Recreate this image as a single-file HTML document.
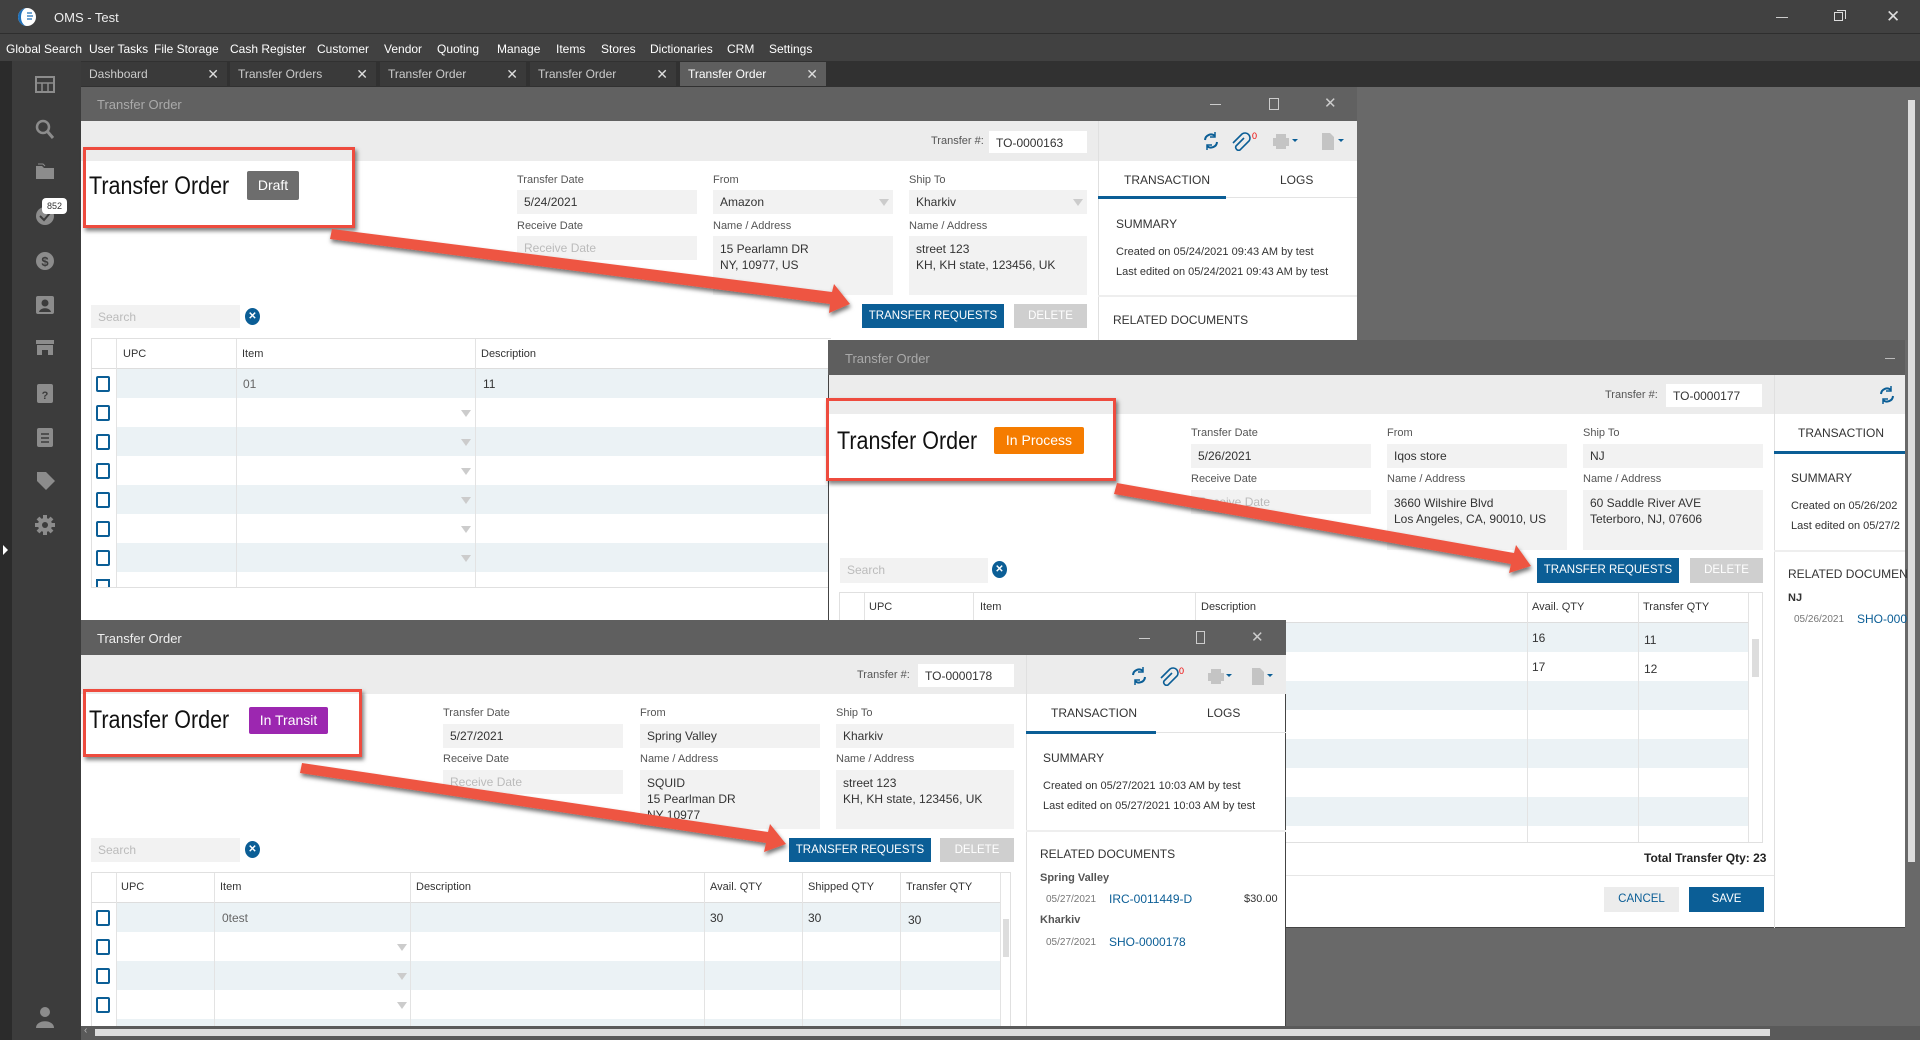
<!DOCTYPE html>
<html><head><meta charset="utf-8"><style>
*{box-sizing:border-box;margin:0;padding:0}
body{width:1920px;height:1040px;overflow:hidden;background:#696969;font-family:"Liberation Sans",sans-serif;position:relative;color:#333}
.a{position:absolute}
.t{position:absolute;white-space:nowrap}
.menu{font-size:12px;color:#fff;top:42px}
.tab{position:absolute;top:62px;height:24px;width:146px;background:#3a3a3a;color:#ccc;font-size:12px;line-height:24px;padding-left:8px}
.tab span{position:absolute;right:8px;top:0;font-size:14px;color:#ddd}
.tb{position:absolute;background:#606060}
.lbl{position:absolute;font-size:11px;color:#555;white-space:nowrap}
.inp{position:absolute;background:#f2f2f2;font-size:12px;color:#333;padding:5px 7px;white-space:nowrap;overflow:hidden;line-height:14px}
.ph{color:#bbb}
.btn{position:absolute;font-size:11.5px;color:#fff;background:#0b5e96;text-align:center;line-height:24px}
.del{background:#cfcfcf}
.hd{position:absolute;font-size:11px;color:#333;white-space:nowrap}
.cb{position:absolute;width:14px;height:16px;border:2px solid #0b5e96;border-radius:2px;background:#fff}
.row{position:absolute;height:29px}
.alt{background:#ebf2f5}
.dd{position:absolute;width:0;height:0;border-left:5px solid transparent;border-right:5px solid transparent;border-top:7px solid #ccc}
.vl{position:absolute;width:1px;background:#e3e3e3}
.rp{font-size:11px;color:#333}
.red{position:absolute;border:3px solid #ee4b3e;box-shadow:2px 3px 4px rgba(0,0,0,.5)}
.big{position:absolute;font-size:25px;color:#111;white-space:nowrap;transform:scaleX(0.86);transform-origin:0 0}
.badge{position:absolute;color:#fff;font-size:14px;text-align:center;border-radius:2px}
.xc{position:absolute;width:15px;height:17px;border-radius:50%;background:#0b5e96;color:#fff;font-size:10px;text-align:center;line-height:17px;font-weight:bold}
.si{position:absolute;left:36px}
</style></head><body>

<div class="a" style="left:0;top:0;width:1920px;height:34px;background:#414141;border-bottom:1px solid #2e2e2e"></div>
<svg class="a" style="left:17px;top:7px" width="20" height="20"><circle cx="10" cy="10" r="9" fill="#fff"/><path d="M10 1a9 9 0 0 0 0 18a6 9 0 0 1 0-18z" fill="#1d6fb8"/><path d="M10 6h5M10 9h6M10 12h5" stroke="#1d6fb8" stroke-width="1.3"/></svg>
<div class="t" style="left:54px;top:10px;font-size:13px;color:#eee">OMS - Test</div>
<div class="a" style="left:1776px;top:17px;width:12px;height:1px;background:#ccc"></div>
<div class="a" style="left:1834px;top:12px;width:9px;height:9px;border:1px solid #ddd"></div>
<div class="a" style="left:1837px;top:10px;width:9px;height:9px;border-top:1px solid #ddd;border-right:1px solid #ddd"></div>
<div class="t" style="left:1886px;top:7px;font-size:17px;color:#ddd">✕</div>

<div class="a" style="left:0;top:34px;width:1920px;height:27px;background:#414141"></div>
<div class="t menu" style="left:6px">Global Search</div>
<div class="t menu" style="left:89px">User Tasks</div>
<div class="t menu" style="left:154px">File Storage</div>
<div class="t menu" style="left:230px">Cash Register</div>
<div class="t menu" style="left:317px">Customer</div>
<div class="t menu" style="left:384px">Vendor</div>
<div class="t menu" style="left:437px">Quoting</div>
<div class="t menu" style="left:497px">Manage</div>
<div class="t menu" style="left:556px">Items</div>
<div class="t menu" style="left:601px">Stores</div>
<div class="t menu" style="left:650px">Dictionaries</div>
<div class="t menu" style="left:727px">CRM</div>
<div class="t menu" style="left:769px">Settings</div>

<div class="a" style="left:0;top:61px;width:12px;height:979px;background:#2b2b2b"></div>
<div class="a" style="left:12px;top:61px;width:69px;height:979px;background:#3c3c3c"></div>
<div class="a" style="left:81px;top:61px;width:1839px;height:26px;background:#313131"></div>
<svg class="si" width="20" height="500" style="top:75px;left:35px" fill="#8c8c8c">
 <rect x="1" y="2" width="18" height="15" fill="none" stroke="#8c8c8c" stroke-width="2"/><path d="M1 8h18M7 8v9M13 8v9" stroke="#8c8c8c" stroke-width="1.5"/>
 <circle cx="8" cy="52" r="6" fill="none" stroke="#8c8c8c" stroke-width="2.5"/><path d="M12 56l6 7" stroke="#8c8c8c" stroke-width="3"/>
 <path d="M1 91h6l2 2h10v11H1z"/><path d="M3 89h5l2 2" fill="none" stroke="#8c8c8c"/>
 <circle cx="10" cy="141" r="9"/><path d="M5 141l4 4 6-7" fill="none" stroke="#3c3c3c" stroke-width="2"/>
 <circle cx="10" cy="186" r="9"/><text x="10" y="191" font-size="13" font-weight="bold" fill="#3c3c3c" text-anchor="middle" font-family="Liberation Sans">$</text>
 <rect x="1" y="221" width="18" height="18" rx="2"/><circle cx="10" cy="228" r="3.5" fill="#3c3c3c"/><path d="M4 237c1-5 11-5 12 0z" fill="#3c3c3c"/>
 <path d="M1 265h18v4H1zM2 270h16v10h-5v-5H7v5H2z"/>
 <rect x="2" y="309" width="16" height="19" rx="2"/><text x="10" y="324" font-size="11" font-weight="bold" fill="#3c3c3c" text-anchor="middle" font-family="Liberation Sans">?</text>
 <rect x="2" y="353" width="16" height="19" rx="2"/><path d="M6 359h8M6 363h8M6 367h8" stroke="#3c3c3c" stroke-width="1.5"/>
 <path d="M2 397l9 0 9 9-9 9-9-9z"/>
 <circle cx="10" cy="450" r="7"/><path d="M10 440v20M0 450h20M3 443l14 14M17 443L3 457" stroke="#8c8c8c" stroke-width="4"/><circle cx="10" cy="450" r="3" fill="#3c3c3c"/>
</svg>
<div class="a" style="left:42px;top:198px;width:25px;height:16px;background:#fff;border-radius:4px;font-size:9px;color:#333;text-align:center;line-height:16px">852</div>
<div class="a" style="left:3px;top:545px;border-top:5px solid transparent;border-bottom:5px solid transparent;border-left:5px solid #fff"></div>
<svg class="a" style="left:35px;top:1006px" width="20" height="22" fill="#8c8c8c"><circle cx="10" cy="6" r="5"/><path d="M1 22c0-9 18-9 18 0z"/></svg>

<div class="tab" style="left:81px">Dashboard<span>✕</span></div>
<div class="tab" style="left:230px">Transfer Orders<span>✕</span></div>
<div class="tab" style="left:380px">Transfer Order<span>✕</span></div>
<div class="tab" style="left:530px">Transfer Order<span>✕</span></div>
<div class="tab" style="left:680px;background:#5e5e5e;color:#fff">Transfer Order<span>✕</span></div>

<div class="a" style="left:1908px;top:100px;width:7px;height:762px;background:#ddd"></div>

<!-- WINDOW 1 -->
<div class="a" style="left:81px;top:87px;width:1276px;height:533px;background:#fff"></div>
<div class="tb" style="left:81px;top:87px;width:1276px;height:34px;background:#616161"></div>
<div class="t" style="left:97px;top:97px;font-size:13px;color:#aaa">Transfer Order</div>
<div class="a" style="left:1210px;top:104px;width:11px;height:1px;background:#ccc"></div>
<div class="a" style="left:1269px;top:98px;width:10px;height:12px;border:1px solid #ccc"></div>
<div class="t" style="left:1324px;top:94px;font-size:15px;color:#ccc">✕</div>
<div class="a" style="left:81px;top:121px;width:1276px;height:40px;background:#ececec"></div>
<div class="a" style="left:1098px;top:121px;width:1px;height:499px;background:#e0e0e0"></div>
<div class="lbl" style="left:931px;top:135px">Transfer #:</div>
<div class="inp" style="left:989px;top:131px;width:98px;height:22px;background:#fff">TO-0000163</div>
<svg class="a" style="left:1200px;top:131px" width="150" height="20">
 <path d="M5 9a6 6 0 0 1 10-4M17 11a6 6 0 0 1-10 4" fill="none" stroke="#0b5e96" stroke-width="2"/><path d="M15 1v5h-5M7 19v-5h5" fill="none" stroke="#0b5e96" stroke-width="1.5"/>
 <path d="M44 7l-8 8a3 3 0 0 0 4 4l9-9a5 5 0 0 0-7-7l-9 9" fill="none" stroke="#0b5e96" stroke-width="1.6"/>
 <text x="52" y="8" font-size="9" fill="#e00" font-family="Liberation Sans">0</text>
 <rect x="73" y="7" width="16" height="8" fill="#c4c4c4"/><rect x="76" y="3" width="10" height="4" fill="#c4c4c4"/><rect x="76" y="13" width="10" height="5" fill="#c4c4c4"/><path d="M92 8h6l-3 3z" fill="#0b5e96"/>
 <path d="M122 2h8l4 4v13h-12z" fill="#c4c4c4"/><path d="M138 8h6l-3 3z" fill="#0b5e96"/>
</svg>
<div class="big" style="left:89px;top:172px">Transfer Order</div>
<div class="badge" style="left:247px;top:171px;width:52px;height:29px;line-height:29px;background:#6d6d6d">Draft</div>
<div class="lbl" style="left:517px;top:174px">Transfer Date</div>
<div class="lbl" style="left:713px;top:174px">From</div>
<div class="lbl" style="left:909px;top:174px">Ship To</div>
<div class="inp" style="left:517px;top:190px;width:180px;height:24px">5/24/2021</div>
<div class="inp" style="left:713px;top:190px;width:180px;height:24px">Amazon</div>
<div class="dd" style="left:879px;top:199px"></div>
<div class="inp" style="left:909px;top:190px;width:178px;height:24px">Kharkiv</div>
<div class="dd" style="left:1073px;top:199px"></div>
<div class="lbl" style="left:517px;top:220px">Receive Date</div>
<div class="lbl" style="left:713px;top:220px">Name / Address</div>
<div class="lbl" style="left:909px;top:220px">Name / Address</div>
<div class="inp ph" style="left:517px;top:236px;width:180px;height:24px">Receive Date</div>
<div class="inp" style="left:713px;top:236px;width:180px;height:59px;line-height:16px">15 Pearlamn DR<br>NY, 10977, US</div>
<div class="inp" style="left:909px;top:236px;width:178px;height:59px;line-height:16px">street 123<br>KH, KH state, 123456, UK</div>
<div class="inp ph" style="left:91px;top:305px;width:149px;height:23px">Search</div>
<div class="xc" style="left:245px;top:308px">✕</div>
<div class="btn" style="left:862px;top:304px;width:142px;height:24px">TRANSFER REQUESTS</div>
<div class="btn del" style="left:1014px;top:304px;width:73px;height:24px">DELETE</div>
<div class="t rp" style="left:1124px;top:173px;font-size:12px">TRANSACTION</div>
<div class="t rp" style="left:1280px;top:173px;font-size:12px">LOGS</div>
<div class="a" style="left:1098px;top:197px;width:259px;height:1px;background:#e3e3e3"></div>
<div class="a" style="left:1098px;top:196px;width:128px;height:3px;background:#0b5e96"></div>
<div class="t rp" style="left:1116px;top:217px;font-size:12px">SUMMARY</div>
<div class="t rp" style="left:1116px;top:246px">Created on 05/24/2021 09:43 AM by test</div>
<div class="t rp" style="left:1116px;top:266px">Last edited on 05/24/2021 09:43 AM by test</div>
<div class="a" style="left:1098px;top:295px;width:259px;height:2px;background:#eee"></div>
<div class="t rp" style="left:1113px;top:313px;font-size:12px">RELATED DOCUMENTS</div>
<div class="a" style="left:91px;top:338px;width:740px;height:250px;border:1px solid #e0e0e0;border-right:none"></div>
<div class="a" style="left:91px;top:368px;width:740px;height:1px;background:#ddd"></div>
<div class="hd" style="left:123px;top:348px">UPC</div>
<div class="hd" style="left:242px;top:348px">Item</div>
<div class="hd" style="left:481px;top:348px">Description</div>
<div class="row alt" style="left:117px;top:369px;width:714px"></div>
<div class="row alt" style="left:117px;top:427px;width:714px"></div>
<div class="row alt" style="left:117px;top:485px;width:714px"></div>
<div class="row alt" style="left:117px;top:543px;width:714px"></div>
<div class="vl" style="left:116px;top:339px;height:248px"></div>
<div class="vl" style="left:236px;top:339px;height:248px"></div>
<div class="vl" style="left:475px;top:339px;height:248px"></div>
<div class="t" style="left:243px;top:377px;font-size:12px;color:#666">01</div>
<div class="t" style="left:483px;top:377px;font-size:12px;color:#333">11</div>
<div class="cb" style="left:96px;top:376px"></div><div class="cb" style="left:96px;top:405px"></div><div class="cb" style="left:96px;top:434px"></div><div class="cb" style="left:96px;top:463px"></div><div class="cb" style="left:96px;top:492px"></div><div class="cb" style="left:96px;top:521px"></div><div class="cb" style="left:96px;top:550px"></div>
<div class="a" style="left:96px;top:579px;width:14px;height:8px;border:2px solid #0b5e96;border-bottom:none"></div>
<div class="dd" style="left:461px;top:410px"></div><div class="dd" style="left:461px;top:439px"></div><div class="dd" style="left:461px;top:468px"></div><div class="dd" style="left:461px;top:497px"></div><div class="dd" style="left:461px;top:526px"></div><div class="dd" style="left:461px;top:555px"></div>

<!-- WINDOW 2 -->
<div class="a" style="left:828px;top:340px;width:1077px;height:588px;background:#fff;border-left:1px solid #444;border-bottom:1px solid #444"></div>
<div class="tb" style="left:828px;top:340px;width:1077px;height:35px;background:#5e5e5e"></div>
<div class="t" style="left:845px;top:351px;font-size:13px;color:#aaa">Transfer Order</div>
<div class="a" style="left:1885px;top:358px;width:10px;height:1px;background:#bbb"></div>
<div class="a" style="left:829px;top:375px;width:1076px;height:39px;background:#ececec"></div>
<div class="a" style="left:1774px;top:375px;width:1px;height:553px;background:#e0e0e0"></div>
<div class="lbl" style="left:1605px;top:389px">Transfer #:</div>
<div class="inp" style="left:1666px;top:384px;width:96px;height:23px;background:#fff">TO-0000177</div>
<svg class="a" style="left:1876px;top:385px" width="22" height="20"><path d="M5 9a6 6 0 0 1 10-4M17 11a6 6 0 0 1-10 4" fill="none" stroke="#0b5e96" stroke-width="2"/><path d="M15 1v5h-5M7 19v-5h5" fill="none" stroke="#0b5e96" stroke-width="1.5"/></svg>
<div class="big" style="left:837px;top:427px">Transfer Order</div>
<div class="badge" style="left:994px;top:427px;width:90px;height:27px;line-height:27px;background:#f57c00">In Process</div>
<div class="lbl" style="left:1191px;top:427px">Transfer Date</div>
<div class="lbl" style="left:1387px;top:427px">From</div>
<div class="lbl" style="left:1583px;top:427px">Ship To</div>
<div class="inp" style="left:1191px;top:444px;width:180px;height:24px">5/26/2021</div>
<div class="inp" style="left:1387px;top:444px;width:180px;height:24px">Iqos store</div>
<div class="inp" style="left:1583px;top:444px;width:180px;height:24px">NJ</div>
<div class="lbl" style="left:1191px;top:473px">Receive Date</div>
<div class="lbl" style="left:1387px;top:473px">Name / Address</div>
<div class="lbl" style="left:1583px;top:473px">Name / Address</div>
<div class="inp ph" style="left:1191px;top:490px;width:180px;height:24px">Receive Date</div>
<div class="inp" style="left:1387px;top:490px;width:180px;height:60px;line-height:16px">3660 Wilshire Blvd<br>Los Angeles, CA, 90010, US</div>
<div class="inp" style="left:1583px;top:490px;width:180px;height:60px;line-height:16px">60 Saddle River AVE<br>Teterboro, NJ, 07606</div>
<div class="inp ph" style="left:840px;top:558px;width:148px;height:25px">Search</div>
<div class="xc" style="left:992px;top:561px">✕</div>
<div class="btn" style="left:1537px;top:558px;width:142px;height:25px">TRANSFER REQUESTS</div>
<div class="btn del" style="left:1690px;top:558px;width:73px;height:25px">DELETE</div>
<div class="a" style="left:839px;top:592px;width:924px;height:251px;border:1px solid #e0e0e0"></div>
<div class="a" style="left:839px;top:622px;width:909px;height:1px;background:#ddd"></div>
<div class="hd" style="left:869px;top:601px">UPC</div>
<div class="hd" style="left:980px;top:601px">Item</div>
<div class="hd" style="left:1201px;top:601px">Description</div>
<div class="hd" style="left:1532px;top:601px">Avail. QTY</div>
<div class="hd" style="left:1643px;top:601px">Transfer QTY</div>
<div class="row alt" style="left:864px;top:623px;width:884px"></div>
<div class="row alt" style="left:864px;top:681px;width:884px"></div>
<div class="row alt" style="left:864px;top:739px;width:884px"></div>
<div class="row alt" style="left:864px;top:797px;width:884px"></div>
<div class="vl" style="left:864px;top:593px;height:249px"></div>
<div class="vl" style="left:973px;top:593px;height:249px"></div>
<div class="vl" style="left:1195px;top:593px;height:249px"></div>
<div class="vl" style="left:1527px;top:593px;height:249px"></div>
<div class="vl" style="left:1638px;top:593px;height:249px"></div>
<div class="vl" style="left:1748px;top:593px;height:249px"></div>
<div class="a" style="left:1752px;top:639px;width:7px;height:38px;background:#ddd"></div>
<div class="t" style="left:1532px;top:631px;font-size:12px">16</div>
<div class="t" style="left:1644px;top:633px;font-size:12px">11</div>
<div class="t" style="left:1532px;top:660px;font-size:12px">17</div>
<div class="t" style="left:1644px;top:662px;font-size:12px">12</div>
<div class="t" style="left:1644px;top:851px;font-size:12px;font-weight:bold;color:#222">Total Transfer Qty: 23</div>
<div class="a" style="left:829px;top:875px;width:945px;height:1px;background:#e6e6e6"></div>
<div class="btn" style="left:1604px;top:887px;width:75px;height:25px;background:#ececec;color:#0b5e96">CANCEL</div>
<div class="btn" style="left:1689px;top:887px;width:75px;height:25px">SAVE</div>
<div class="t rp" style="left:1798px;top:426px;font-size:12px">TRANSACTION</div>
<div class="a" style="left:1774px;top:451px;width:131px;height:3px;background:#0b5e96"></div>
<div class="t rp" style="left:1791px;top:471px;font-size:12px">SUMMARY</div>
<div class="t rp" style="left:1791px;top:500px">Created on 05/26/202</div>
<div class="t rp" style="left:1791px;top:520px">Last edited on 05/27/2</div>
<div class="a" style="left:1774px;top:550px;width:131px;height:2px;background:#eee"></div>
<div class="t rp" style="left:1788px;top:567px;font-size:12px">RELATED DOCUMEN</div>
<div class="t rp" style="left:1788px;top:592px;font-weight:bold">NJ</div>
<div class="t" style="left:1794px;top:614px;font-size:10px;color:#777">05/26/2021</div>
<div class="t" style="left:1857px;top:612px;font-size:12px;color:#0b5e96">SHO-000</div>

<!-- WINDOW 3 -->
<div class="a" style="left:81px;top:620px;width:1205px;height:406px;background:#fff;border-right:1px solid #444"></div>
<div class="tb" style="left:81px;top:620px;width:1205px;height:35px;background:#5f5f5f"></div>
<div class="t" style="left:97px;top:631px;font-size:13px;color:#eee">Transfer Order</div>
<div class="a" style="left:1139px;top:638px;width:11px;height:1px;background:#ccc"></div>
<div class="a" style="left:1196px;top:631px;width:9px;height:13px;border:1px solid #ccc"></div>
<div class="t" style="left:1251px;top:628px;font-size:15px;color:#ccc">✕</div>
<div class="a" style="left:81px;top:655px;width:1205px;height:39px;background:#ececec"></div>
<div class="a" style="left:1026px;top:655px;width:1px;height:371px;background:#e0e0e0"></div>
<div class="lbl" style="left:857px;top:669px">Transfer #:</div>
<div class="inp" style="left:918px;top:664px;width:96px;height:23px;background:#fff">TO-0000178</div>
<svg class="a" style="left:1128px;top:666px" width="150" height="20">
 <path d="M5 9a6 6 0 0 1 10-4M17 11a6 6 0 0 1-10 4" fill="none" stroke="#0b5e96" stroke-width="2"/><path d="M15 1v5h-5M7 19v-5h5" fill="none" stroke="#0b5e96" stroke-width="1.5"/>
 <path d="M44 7l-8 8a3 3 0 0 0 4 4l9-9a5 5 0 0 0-7-7l-9 9" fill="none" stroke="#0b5e96" stroke-width="1.6"/>
 <text x="51" y="8" font-size="9" fill="#e00" font-family="Liberation Sans">0</text>
 <rect x="80" y="7" width="16" height="8" fill="#c4c4c4"/><rect x="83" y="3" width="10" height="4" fill="#c4c4c4"/><rect x="83" y="13" width="10" height="5" fill="#c4c4c4"/><path d="M98 8h6l-3 3z" fill="#0b5e96"/>
 <path d="M124 2h8l4 4v13h-12z" fill="#c4c4c4"/><path d="M139 8h6l-3 3z" fill="#0b5e96"/>
</svg>
<div class="big" style="left:89px;top:706px">Transfer Order</div>
<div class="badge" style="left:249px;top:707px;width:79px;height:27px;line-height:27px;background:#9c27b0">In Transit</div>
<div class="lbl" style="left:443px;top:707px">Transfer Date</div>
<div class="lbl" style="left:640px;top:707px">From</div>
<div class="lbl" style="left:836px;top:707px">Ship To</div>
<div class="inp" style="left:443px;top:724px;width:180px;height:24px">5/27/2021</div>
<div class="inp" style="left:640px;top:724px;width:180px;height:24px">Spring Valley</div>
<div class="inp" style="left:836px;top:724px;width:178px;height:24px">Kharkiv</div>
<div class="lbl" style="left:443px;top:753px">Receive Date</div>
<div class="lbl" style="left:640px;top:753px">Name / Address</div>
<div class="lbl" style="left:836px;top:753px">Name / Address</div>
<div class="inp ph" style="left:443px;top:770px;width:180px;height:24px">Receive Date</div>
<div class="inp" style="left:640px;top:770px;width:180px;height:59px;line-height:16px">SQUID<br>15 Pearlman DR<br>NY 10977</div>
<div class="inp" style="left:836px;top:770px;width:178px;height:59px;line-height:16px">street 123<br>KH, KH state, 123456, UK</div>
<div class="inp ph" style="left:91px;top:838px;width:149px;height:24px">Search</div>
<div class="xc" style="left:245px;top:841px">✕</div>
<div class="btn" style="left:789px;top:838px;width:142px;height:24px">TRANSFER REQUESTS</div>
<div class="btn del" style="left:940px;top:838px;width:74px;height:24px">DELETE</div>
<div class="a" style="left:91px;top:872px;width:920px;height:160px;border:1px solid #e0e0e0"></div>
<div class="a" style="left:91px;top:902px;width:909px;height:1px;background:#ddd"></div>
<div class="hd" style="left:121px;top:881px">UPC</div>
<div class="hd" style="left:220px;top:881px">Item</div>
<div class="hd" style="left:416px;top:881px">Description</div>
<div class="hd" style="left:710px;top:881px">Avail. QTY</div>
<div class="hd" style="left:808px;top:881px">Shipped QTY</div>
<div class="hd" style="left:906px;top:881px">Transfer QTY</div>
<div class="row alt" style="left:116px;top:903px;width:884px"></div>
<div class="row alt" style="left:116px;top:961px;width:884px"></div>
<div class="row alt" style="left:116px;top:1019px;width:884px;height:7px"></div>
<div class="vl" style="left:116px;top:873px;height:153px"></div>
<div class="vl" style="left:214px;top:873px;height:153px"></div>
<div class="vl" style="left:410px;top:873px;height:153px"></div>
<div class="vl" style="left:704px;top:873px;height:153px"></div>
<div class="vl" style="left:802px;top:873px;height:153px"></div>
<div class="vl" style="left:900px;top:873px;height:153px"></div>
<div class="vl" style="left:1000px;top:873px;height:153px"></div>
<div class="a" style="left:1003px;top:919px;width:6px;height:38px;background:#ddd"></div>
<div class="t" style="left:222px;top:911px;font-size:12px;color:#666">0test</div>
<div class="t" style="left:710px;top:911px;font-size:12px">30</div>
<div class="t" style="left:808px;top:911px;font-size:12px">30</div>
<div class="t" style="left:908px;top:913px;font-size:12px">30</div>
<div class="cb" style="left:96px;top:910px"></div><div class="cb" style="left:96px;top:939px"></div><div class="cb" style="left:96px;top:968px"></div><div class="cb" style="left:96px;top:997px"></div>
<div class="dd" style="left:397px;top:944px"></div><div class="dd" style="left:397px;top:973px"></div><div class="dd" style="left:397px;top:1002px"></div>
<div class="t rp" style="left:1051px;top:706px;font-size:12px">TRANSACTION</div>
<div class="t rp" style="left:1207px;top:706px;font-size:12px">LOGS</div>
<div class="a" style="left:1026px;top:732px;width:260px;height:1px;background:#e3e3e3"></div>
<div class="a" style="left:1026px;top:731px;width:130px;height:3px;background:#0b5e96"></div>
<div class="t rp" style="left:1043px;top:751px;font-size:12px">SUMMARY</div>
<div class="t rp" style="left:1043px;top:780px">Created on 05/27/2021 10:03 AM by test</div>
<div class="t rp" style="left:1043px;top:800px">Last edited on 05/27/2021 10:03 AM by test</div>
<div class="a" style="left:1026px;top:830px;width:260px;height:2px;background:#eee"></div>
<div class="t rp" style="left:1040px;top:847px;font-size:12px">RELATED DOCUMENTS</div>
<div class="t rp" style="left:1040px;top:872px;font-weight:bold;color:#555">Spring Valley</div>
<div class="t" style="left:1046px;top:894px;font-size:10px;color:#777">05/27/2021</div>
<div class="t" style="left:1109px;top:892px;font-size:12px;color:#0b5e96">IRC-0011449-D</div>
<div class="t" style="left:1244px;top:893px;font-size:11px;color:#333">$30.00</div>
<div class="t rp" style="left:1040px;top:914px;font-weight:bold;color:#555">Kharkiv</div>
<div class="t" style="left:1046px;top:937px;font-size:10px;color:#777">05/27/2021</div>
<div class="t" style="left:1109px;top:935px;font-size:12px;color:#0b5e96">SHO-0000178</div>

<div class="a" style="left:81px;top:1026px;width:1839px;height:14px;background:#5a5a5a"></div>
<div class="a" style="left:95px;top:1029px;width:1675px;height:7px;background:#ddd"></div>
<div class="t" style="left:84px;top:1025px;font-size:10px;color:#bbb">‹</div>

<div class="red" style="left:83px;top:147px;width:272px;height:81px"></div>
<div class="red" style="left:826px;top:398px;width:290px;height:83px"></div>
<div class="red" style="left:83px;top:689px;width:279px;height:68px"></div>

<svg class="a" style="left:0;top:0" width="1920" height="1040">
<defs><filter id="s" x="-10%" y="-50%" width="120%" height="200%"><feDropShadow dx="1" dy="3" stdDeviation="2" flood-color="#000" flood-opacity=".55"/></filter></defs>
<g fill="#ee5443" filter="url(#s)">
<polygon points="332,229 832,292 834,284 850,304 829,313 830,304 330,239"/>
<polygon points="1117,483 1514,553 1516,545 1531,566 1509,573 1511,564 1114,494"/>
<polygon points="302,763 768,832 770,824 786,844 764,852 766,843 300,773"/>
</g>
</svg>
</body></html>
